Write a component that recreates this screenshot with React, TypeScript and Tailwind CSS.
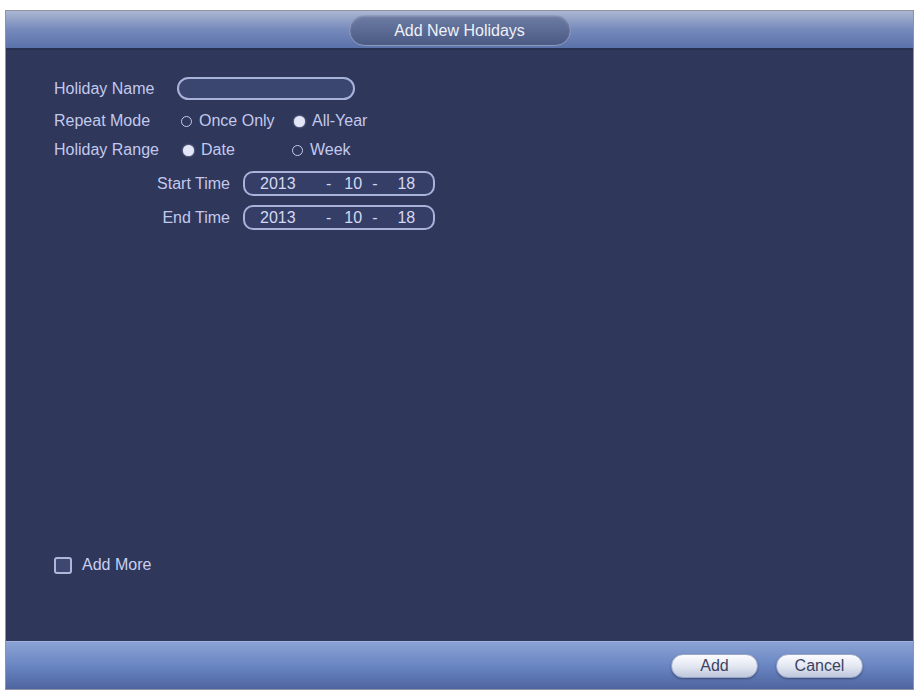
import React from 'react';

const font = { fontFamily: '"Liberation Sans", Arial, sans-serif' };

const Radio = ({ checked, label, className = '' }: { checked?: boolean; label: string; className?: string }) => (
    <div className={`flex items-center ${className}`}>
        {checked ? (
            <span className="w-[11px] h-[11px] rounded-full bg-[#e2e6f6] shadow-[0_0_2px_#c8d0f0]" />
        ) : (
            <span className="w-[11px] h-[11px] rounded-full border-[1.5px] border-[#c6cbe8]" />
        )}
        <span className="ml-[7px]">{label}</span>
    </div>
);

const DateField = ({ year, month, day }: { year: string; month: string; day: string }) => (
    <div className="flex items-center w-[192px] h-[25px] rounded-[10px] border-2 border-[#a9b3da] bg-[#353e66] text-[#d4d9f2]">
        <span className="ml-[15px] w-[35px]">{year}</span>
        <span className="ml-[31px]">-</span>
        <span className="ml-[13px]">{month}</span>
        <span className="ml-[10px]">-</span>
        <span className="ml-[20px]">{day}</span>
    </div>
);

const PillButton = ({ label }: { label: string }) => (
    <button className="w-[87px] h-[24px] rounded-full border border-[#9aa6c8] bg-gradient-to-b from-[#fbfcff] via-[#e4e8f2] to-[#bfc7dc] text-[#3b4262] text-[16px] leading-none shadow-[0_1px_2px_rgba(0,0,0,0.35)]">
        {label}
    </button>
);

export default function App() {
    return (
        <div className="w-[918px] h-[693px] bg-white pt-[10px] pl-[5px]" style={font}>
            <div className="w-[909px] h-[680px] flex flex-col border border-[#8d93a4] bg-[#2f375a] text-[16px] text-[#c3c9ee]">
                {/* Title bar */}
                <div className="h-[39px] flex items-center justify-center bg-gradient-to-b from-[#abb7d2] via-[#7689bb] to-[#5a72aa] border-b-2 border-[#27304f]">
                    <div className="w-[222px] h-[31px] mt-[2px] flex items-center justify-center rounded-full border border-[#8d9bbd] bg-gradient-to-b from-[#6d7ca3] to-[#4b5a84] text-[#eef1fa] shadow-[inset_0_1px_2px_rgba(255,255,255,0.2)]">
                        Add New Holidays
                    </div>
                </div>

                {/* Form */}
                <div className="flex-1 flex flex-col pl-[48px] pt-[27px]">
                    <div className="flex items-center h-[23px]">
                        <span className="w-[123px]">Holiday Name</span>
                        <div className="w-[178px] h-[23px] rounded-full border-2 border-[#a9b3da] bg-[#3b4670]" />
                    </div>

                    <div className="flex items-center h-[22px] mt-[10px]">
                        <span className="w-[127px]">Repeat Mode</span>
                        <Radio label="Once Only" className="w-[113px]" />
                        <Radio checked label="All-Year" />
                    </div>

                    <div className="flex items-center h-[22px] mt-[7px]">
                        <span className="w-[129px]">Holiday Range</span>
                        <Radio checked label="Date" className="w-[109px]" />
                        <Radio label="Week" />
                    </div>

                    <div className="flex items-center h-[25px] mt-[10px]">
                        <span className="w-[179px] pr-[3px] text-right">Start Time</span>
                        <span className="w-[10px]" />
                        <DateField year="2013" month="10" day="18" />
                    </div>

                    <div className="flex items-center h-[25px] mt-[9px]">
                        <span className="w-[179px] pr-[3px] text-right">End Time</span>
                        <span className="w-[10px]" />
                        <DateField year="2013" month="10" day="18" />
                    </div>

                    <div className="flex items-center mt-auto mb-[67px] h-[18px]">
                        <span className="w-[18px] h-[17px] rounded-[3px] border-2 border-[#aeb6da] bg-[#3d4770]" />
                        <span className="ml-[10px] text-[#c9cff2]">Add More</span>
                    </div>
                </div>

                {/* Footer */}
                <div className="h-[48px] flex items-center justify-end gap-[18px] pr-[50px] bg-gradient-to-b from-[#8ba3d4] via-[#6a86c2] to-[#4d64a0] border-t border-[#9fb3dc]">
                    <PillButton label="Add" />
                    <PillButton label="Cancel" />
                </div>
            </div>
        </div>
    );
}
